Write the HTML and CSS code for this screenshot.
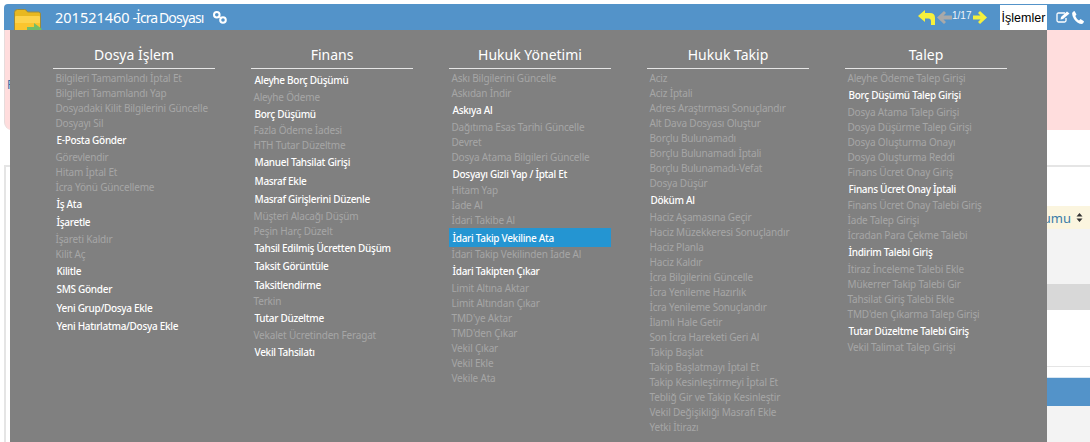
FILE: index.html
```html
<!DOCTYPE html>
<html lang="tr">
<head>
<meta charset="utf-8">
<title>İcra Dosyası</title>
<link rel="stylesheet" href="styles.css">
</head>
<body>
<div class="page">
  <header class="bar">
    <svg class="folder" width="29" height="22" viewBox="0 0 29 22"><path d="M.5 4.500q0-3 3-3h7q2 0 3 2.500h11q2 0 2 2V22H.5z" fill="#e8b820" stroke="#9a8a40"/><path d="M1 9q0-1 1-1h23q1 0 1 1v13H1z" fill="#fdd34c"/><path d="M1 15h25v7H1z" fill="#fbc52e"/><path d="M13 22v-3h7v-4l8 6-1 1z" fill="#74bd68"/></svg>
    <h1 class="title"><span class="num">201521460</span> <span class="name">-İcra Dosyası</span></h1>
    <svg class="link" width="14" height="13" viewBox="0 0 14 13" fill="none"><circle cx="3.800" cy="3.800" r="2.800" stroke="#fff" stroke-width="2"/><circle cx="10" cy="9" r="2.800" stroke="#fff" stroke-width="2"/><path d="m5.500 5 3 2.500" stroke="#fff" stroke-width="1.500"/></svg>
    <div class="pager">
      <svg class="back" width="17" height="15" viewBox="0 0 17 15"><path d="M7 0 0 6l7 6V8.500h3.500q2.500 0 2.500 3V15h4V8q0-5-5-5H7z" fill="#f6f03c"/></svg>
      <svg class="prev" width="15" height="13" viewBox="0 0 15 13"><path d="M7 0 0 6.500 7 13l2-2-2.500-2.500H15v-4H6.500L9 2z" fill="#a9a9a9"/></svg>
      <span class="count">1/17</span>
      <svg class="next" width="14" height="13" viewBox="0 0 14 13"><path d="m7 0 7 6.500L7 13l-2-2 2.500-2.500H0v-4h7.500L5 2z" fill="#f6f03c"/></svg>
    </div>
    <div class="actions">İşlemler</div>
    <svg class="edit" width="14" height="12" viewBox="0 0 14 12" fill="none" stroke="#fff" stroke-width="1.300"><path d="M9 2H2.500Q1 2 1 3.500v6Q1 11 2.500 11h6q1.500 0 1.500-1.500V7"/><path d="m4.500 8.500.5-2.500L11 .5l2.500 2L7 8z" fill="#fff" stroke="none"/></svg>
    <svg class="phone" width="12" height="13" viewBox="0 0 12 13"><path d="M2.500 0 4.500 3.500 3.300 5q1.200 3 3.700 4.500L8.500 8 12 10.200q-.3 2-2 2.800Q5.500 13 2 8 -.2 4.500.2 2 .7.500 2.500 0z" fill="#fff"/></svg>
  </header>
  <section class="alert"><span class="alert-letter">F</span></section>
  <section class="card">
    <div class="th"><span>Durumu</span><svg class="sort" width="7" height="9" viewBox="0 0 7 9"><path d="M3.500 0 6.500 3.600H.5zM3.500 9 .5 5.400h6z" fill="#333"/></svg></div>
    <div class="row-light"></div>
    <div class="row-dark"></div>
    <div class="row-white"></div>
    <div class="band"></div>
    <div class="band-after"></div>
  </section>

  <nav class="menu">
    <div class="col">
      <h2>Dosya İşlem</h2>
      <ul>
        <li>Bilgileri Tamamlandı İptal Et</li>
        <li>Bilgileri Tamamlandı Yap</li>
        <li>Dosyadaki Kilit Bilgilerini Güncelle</li>
        <li>Dosyayı Sil</li>
        <li class="on">E-Posta Gönder</li>
        <li>Görevlendir</li>
        <li>Hitam İptal Et</li>
        <li>İcra Yönü Güncelleme</li>
        <li class="on">İş Ata</li>
        <li class="on">İşaretle</li>
        <li>İşareti Kaldır</li>
        <li>Kilit Aç</li>
        <li class="on">Kilitle</li>
        <li class="on">SMS Gönder</li>
        <li class="on">Yeni Grup/Dosya Ekle</li>
        <li class="on">Yeni Hatırlatma/Dosya Ekle</li>
      </ul>
    </div>
    <div class="col">
      <h2>Finans</h2>
      <ul>
        <li class="on">Aleyhe Borç Düşümü</li>
        <li>Aleyhe Ödeme</li>
        <li class="on">Borç Düşümü</li>
        <li>Fazla Ödeme İadesi</li>
        <li>HTH Tutar Düzeltme</li>
        <li class="on">Manuel Tahsilat Girişi</li>
        <li class="on">Masraf Ekle</li>
        <li class="on">Masraf Girişlerini Düzenle</li>
        <li>Müşteri Alacağı Düşüm</li>
        <li>Peşin Harç Düzelt</li>
        <li class="on">Tahsil Edilmiş Ücretten Düşüm</li>
        <li class="on">Taksit Görüntüle</li>
        <li class="on">Taksitlendirme</li>
        <li>Terkin</li>
        <li class="on">Tutar Düzeltme</li>
        <li>Vekalet Ücretinden Feragat</li>
        <li class="on">Vekil Tahsilatı</li>
      </ul>
    </div>
    <div class="col">
      <h2>Hukuk Yönetimi</h2>
      <ul>
        <li>Askı Bilgilerini Güncelle</li>
        <li>Askıdan İndir</li>
        <li class="on">Askıya Al</li>
        <li>Dağıtıma Esas Tarihi Güncelle</li>
        <li>Devret</li>
        <li>Dosya Atama Bilgileri Güncelle</li>
        <li class="on">Dosyayı Gizli Yap / İptal Et</li>
        <li>Hitam Yap</li>
        <li>İade Al</li>
        <li>İdari Takibe Al</li>
        <li class="on sel">İdari Takip Vekiline Ata</li>
        <li>İdari Takip Vekilinden İade Al</li>
        <li class="on">İdari Takipten Çıkar</li>
        <li>Limit Altına Aktar</li>
        <li>Limit Altından Çıkar</li>
        <li>TMD'ye Aktar</li>
        <li>TMD'den Çıkar</li>
        <li>Vekil Çıkar</li>
        <li>Vekil Ekle</li>
        <li>Vekile Ata</li>
      </ul>
    </div>
    <div class="col">
      <h2>Hukuk Takip</h2>
      <ul>
        <li>Aciz</li>
        <li>Aciz İptali</li>
        <li>Adres Araştırması Sonuçlandır</li>
        <li>Alt Dava Dosyası Oluştur</li>
        <li>Borçlu Bulunamadı</li>
        <li>Borçlu Bulunamadı İptali</li>
        <li>Borçlu Bulunamadı-Vefat</li>
        <li>Dosya Düşür</li>
        <li class="on">Döküm Al</li>
        <li>Haciz Aşamasına Geçir</li>
        <li>Haciz Müzekkeresi Sonuçlandır</li>
        <li>Haciz Planla</li>
        <li>Haciz Kaldır</li>
        <li>İcra Bilgilerini Güncelle</li>
        <li>İcra Yenileme Hazırlık</li>
        <li>İcra Yenileme Sonuçlandır</li>
        <li>İlamlı Hale Getir</li>
        <li>Son İcra Hareketi Geri Al</li>
        <li>Takip Başlat</li>
        <li>Takip Başlatmayı İptal Et</li>
        <li>Takip Kesinleştirmeyi İptal Et</li>
        <li>Tebliğ Gir ve Takip Kesinleştir</li>
        <li>Vekil Değişikliği Masrafı Ekle</li>
        <li>Yetki İtirazı</li>
      </ul>
    </div>
    <div class="col">
      <h2>Talep</h2>
      <ul>
        <li>Aleyhe Ödeme Talep Girişi</li>
        <li class="on">Borç Düşümü Talep Girişi</li>
        <li>Dosya Atama Talep Girişi</li>
        <li>Dosya Düşürme Talep Girişi</li>
        <li>Dosya Oluşturma Onayı</li>
        <li>Dosya Oluşturma Reddi</li>
        <li>Finans Ücret Onay Giriş</li>
        <li class="on">Finans Ücret Onay İptali</li>
        <li>Finans Ücret Onay Talebi Giriş</li>
        <li>İade Talep Girişi</li>
        <li>İcradan Para Çekme Talebi</li>
        <li class="on">İndirim Talebi Giriş</li>
        <li>İtiraz İnceleme Talebi Ekle</li>
        <li>Mükerrer Takip Talebi Gir</li>
        <li>Tahsilat Giriş Talebi Ekle</li>
        <li>TMD'den Çıkarma Talep Girişi</li>
        <li class="on">Tutar Düzeltme Talebi Giriş</li>
        <li>Vekil Talimat Talep Girişi</li>
      </ul>
    </div>
  </nav>
</div>
</body>
</html>
```
FILE: styles.css
```css
* { box-sizing: border-box; }
html, body { margin: 0; padding: 0; height: 100%; }
body { background: #fff; overflow: hidden; font-family: "Noto Sans", sans-serif; }
.page { position: relative; width: 1090px; height: 442px; overflow: hidden; padding-top: 4px; }

.bar {
  height: 26px; background: #5393c9; color: #fff; margin-left: 4px;
  border-radius: 4px 0 0 0; display: flex; align-items: center;
  padding-left: 10px;
}
.folder { margin-top: 4px; flex: none; }
.title { margin: 0 0 0 12px; font-size: 14.500px; font-weight: 400; white-space: nowrap; width: 158px; word-spacing: -1px; }
.name { font-size: 14px; letter-spacing: -.9px; }
.link { flex: none; margin-top: 1px; }
.pager { margin-left: auto; display: flex; align-items: center; margin-right: 13px; }
.pager svg { flex: none; }
.back { margin-right: 2px; }
.count { font-family: "Liberation Sans", sans-serif; font-size: 10px; width: 19px; margin-bottom: 3px; color: #f2f6fa; }
.next { margin-left: 2px; }
.actions { width: 47px; height: 25px; margin-top: 1px; background: #fff; color: #000; font-family: "Liberation Sans", sans-serif; font-size: 12.500px; display: flex; align-items: center; justify-content: center; white-space: nowrap; }
.edit { margin-left: 9px; flex: none; }
.phone { margin: 0 6px 0 2px; flex: none; }

.alert { height: 100px; margin-left: 4px; background: #fdd; border-left: 1px solid #e6dcdc; border-radius: 0 0 0 8px; padding-top: 42px; }
.alert-letter { color: #3a6ea5; font-size: 12px; margin-left: 2px; }

.card { margin: 35px 0 0 4px; height: 280px; border-top: 2px solid #e5e5e5; border-left: 2px solid #e5e5e5; padding: 39px 0 0 6px; }
.th { height: 23px; background: #fbf5df; color: #3a7ca8; font-size: 13px; display: flex; align-items: center; justify-content: flex-end; padding-right: 7px; gap: 5px; }
.sort { flex: none; }
.row-light { height: 55px; background: #f3f3f3; }
.row-dark { height: 26px; background: #d8d8d8; }
.row-white { height: 57px; background: #fff; border-bottom: 1px solid #e5e5e5; }
.band { margin-top: 10px; height: 29px; background: #5393c9; border-top: 1px solid #d8e6f2; }
.band-after { height: 40px; background: #f3f3f3; }

.menu {
  position: absolute; left: 10px; top: 30px; width: 1037px; height: 412px;
  background: #808080; display: flex; gap: 36px; padding: 15px 0 0 43px;
}
.col { width: 162px; flex: none; }
.col h2 {
  margin: 0 0 2px; height: 24px; line-height: 19px; text-align: center;
  font-size: 14px; font-weight: 400; color: #fff; border-bottom: 1px solid #e6e6e6;
}
.col ul { list-style: none; margin: 0; padding: 0; }
.col li {
  height: 15px; line-height: 15px; font-size: 10px; letter-spacing: -.18px; color: #a6a6a6;
  white-space: nowrap; padding-left: 2.500px;
}
.col li.on { height: 18.500px; line-height: 18.500px; color: #fff; padding-left: 3.500px; font-weight: 500; letter-spacing: -.3px; }
.col li.sel { background: #2495d2; height: 19px; line-height: 20px; }
```
